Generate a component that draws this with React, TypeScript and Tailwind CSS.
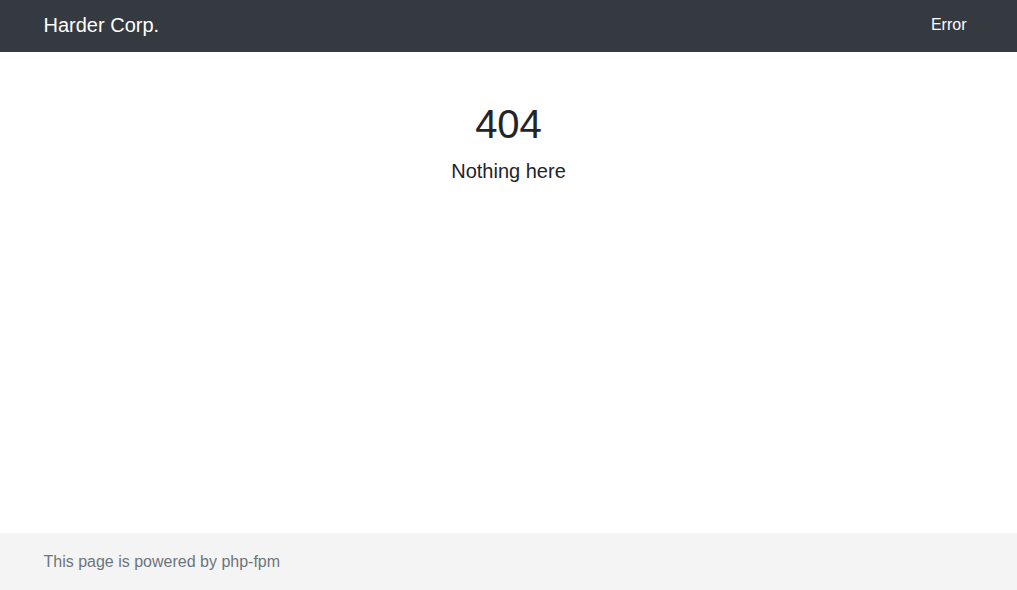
export default function App() {
    return (
        <div className="flex min-h-screen flex-col bg-white text-[#212529]" style={{ fontFamily: '"Liberation Sans", Arial, sans-serif' }}>
            <nav className="h-[52px] bg-[#343a40]">
                <div className="mx-auto flex h-full max-w-[960px] items-center justify-between px-[15px] pb-[2px]">
                    <a href="#" className="text-[20px] leading-[30px] text-white">Harder Corp.</a>
                    <a href="#" className="pl-2 pr-[7px] text-[16px] leading-6 text-white">Error</a>
                </div>
            </nav>
            <main className="flex-1">
                <div className="mx-auto max-w-[960px] px-[15px] pt-[48px] text-center">
                    <h1 className="mb-[11px] text-[40px] leading-[48px]">404</h1>
                    <h5 className="text-[20px] leading-[24px]">Nothing here</h5>
                </div>
            </main>
            <footer className="h-[57px] bg-[#f4f4f4]">
                <div className="mx-auto flex h-full max-w-[960px] items-center px-[15px]">
                    <span className="text-[16px] leading-6 text-[#6c757d]">This page is powered by php-fpm</span>
                </div>
            </footer>
        </div>
    )
}
